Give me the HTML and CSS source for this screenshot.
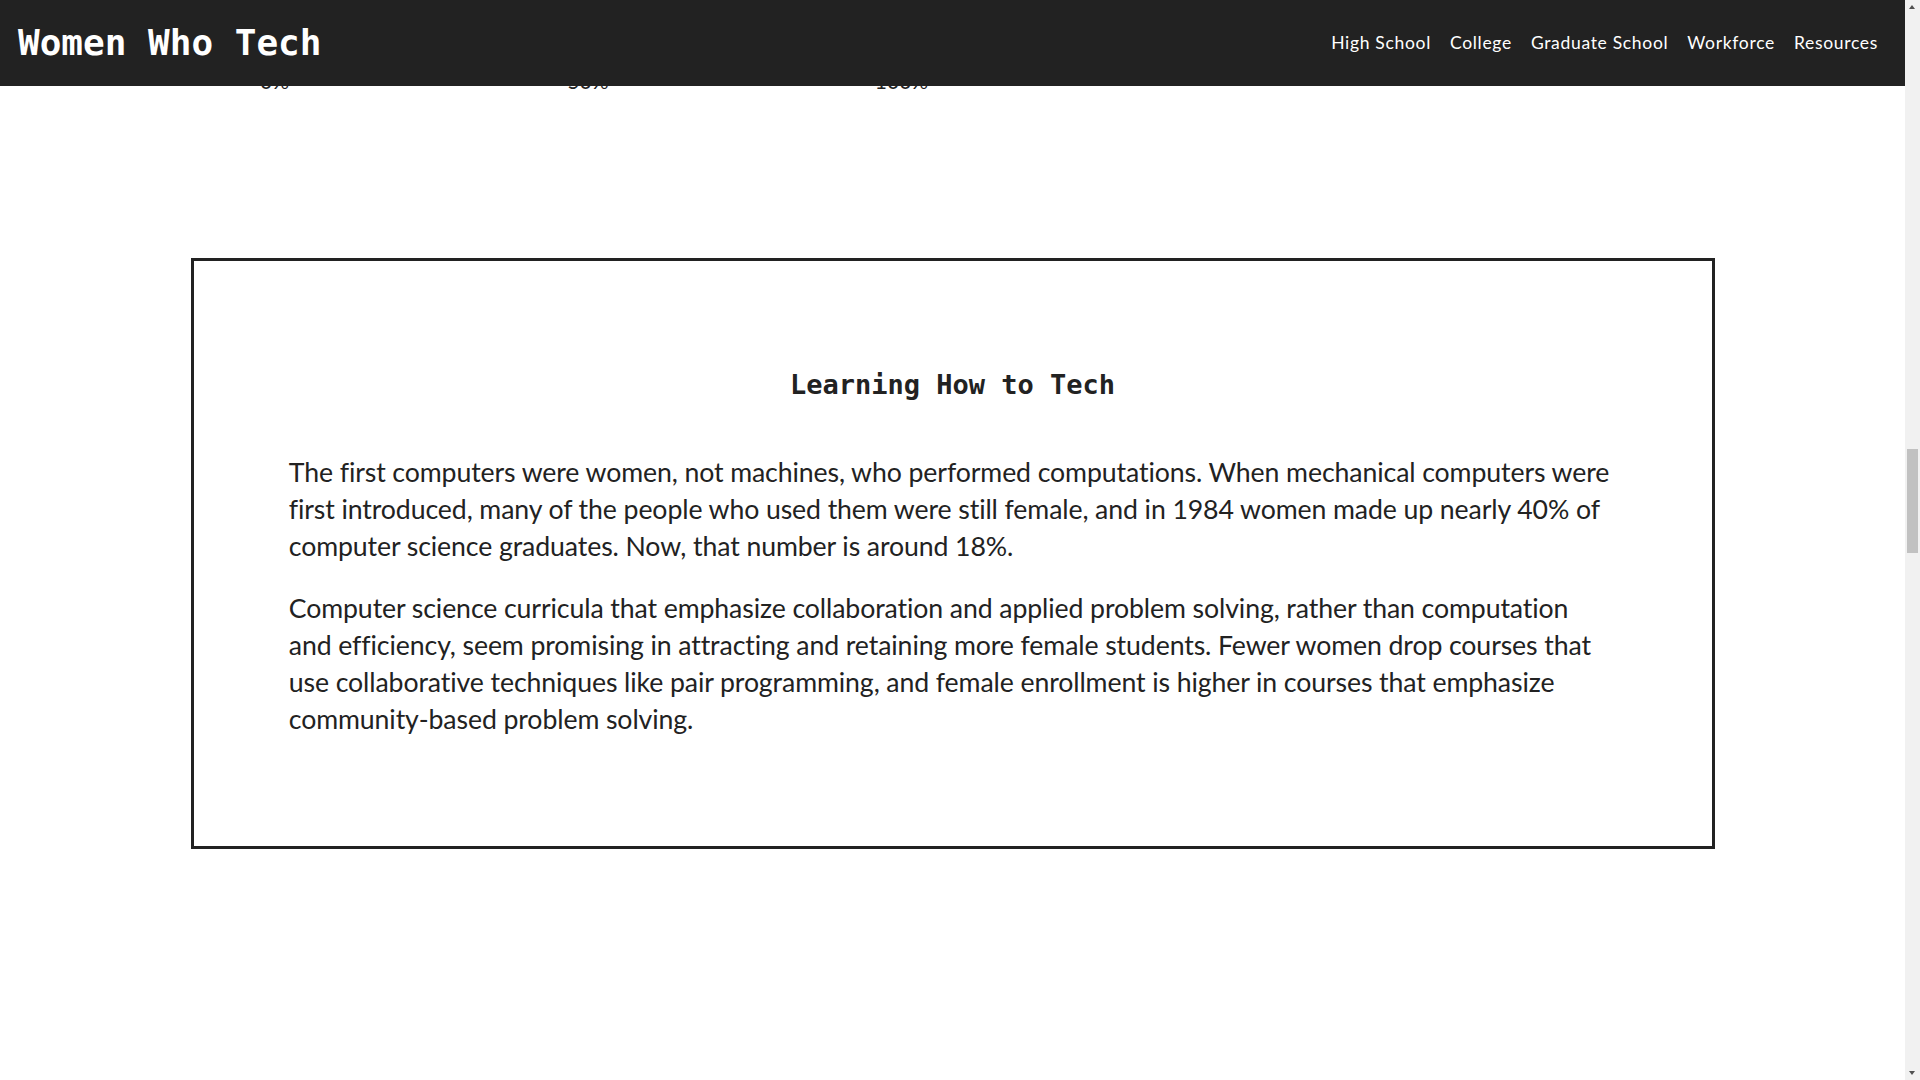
FILE: index.html
```html
<!DOCTYPE html>
<html lang="en">
<head>
<meta charset="utf-8">
<title>Women Who Tech</title>
<link rel="stylesheet" href="styles.css">
</head>
<body>
<header class="site-header">
  <h1 class="logo">Women Who Tech</h1>
  <nav>
    <ul class="nav">
      <li><a href="#high-school">High School</a></li>
      <li><a href="#college">College</a></li>
      <li><a href="#graduate">Graduate School</a></li>
      <li><a href="#workforce">Workforce</a></li>
      <li><a href="#resources">Resources</a></li>
    </ul>
  </nav>
</header>

<div class="scrollbar" aria-hidden="true">
  <span class="scroll-arrow up"></span>
  <span class="scroll-thumb"></span>
  <span class="scroll-arrow down"></span>
</div>

<main>
  <section class="intro" id="high-school">
    <h2 class="section-title">High School</h2>
    <p>Girls and boys take advanced math and science courses at similar rates in high school, yet far fewer girls go on to take computer science.</p>
  </section>

  <section class="chart" id="college">
    <h2 class="section-title">Share of computer science degrees earned by women</h2>
    <div class="bars">
      <div class="bar-row"><span class="bar-label">1984</span><div class="bar" style="width:37%"></div></div>
      <div class="bar-row"><span class="bar-label">2000</span><div class="bar" style="width:28%"></div></div>
      <div class="bar-row"><span class="bar-label">2014</span><div class="bar" style="width:18%"></div></div>
    </div>
    <div class="axis">
      <span class="tick" style="left:0%">0%</span>
      <span class="tick" style="left:50%">50%</span>
      <span class="tick" style="left:100%">100%</span>
    </div>
  </section>

  <section class="learning" id="learning">
    <h2 class="learning-title">Learning How to Tech</h2>
    <p>The first computers were women, not machines, who performed computations. When mechanical computers were first introduced, many of the people who used them were still female, and in 1984 women made up nearly 40% of computer science graduates. Now, that number is around 18%.</p>
    <p>Computer science curricula that emphasize collaboration and applied problem solving, rather than computation and efficiency, seem promising in attracting and retaining more female students. Fewer women drop courses that use collaborative techniques like pair programming, and female enrollment is higher in courses that emphasize community-based problem solving.</p>
  </section>

  <section class="after" id="graduate">
    <h2 class="section-title">Graduate School</h2>
  </section>
</main>
<script src="script.js"></script>
</body>
</html>
```

FILE: styles.css
```css
html {
  overflow-y: scroll;
}

body {
  margin: 0 15px 0 0;
  background: #ffffff;
  color: #222222;
  font-family: Lato, "Open Sans", sans-serif;
}

.site-header {
  position: fixed;
  top: 0;
  left: 0;
  right: 15px;
  height: 86px;
  box-sizing: border-box;
  padding: 0 27px 0 18px;
  background: #222222;
  color: #ffffff;
  display: flex;
  align-items: center;
  justify-content: space-between;
  z-index: 10;
}

.logo {
  margin: 0;
  font-family: "DejaVu Sans Mono", monospace;
  font-weight: bold;
  font-size: 36px;
  line-height: 1;
}

.nav {
  display: flex;
  gap: 19px;
  list-style: none;
  margin: 0 0 2px;
  padding: 0;
}

.nav a {
  color: #ffffff;
  text-decoration: none;
  font-size: 17.5px;
  letter-spacing: 0.68px;
}

/* stand-in for the browser scrollbar of the reference */
.scrollbar {
  position: fixed;
  top: 0;
  right: 0;
  width: 15px;
  height: 100vh;
  background: #f1f1f1;
  z-index: 20;
}

.scroll-arrow {
  position: absolute;
  left: 4px;
  width: 0;
  height: 0;
  border-left: 3.5px solid transparent;
  border-right: 3.5px solid transparent;
}

.scroll-arrow.up {
  top: 5px;
  border-bottom: 4px solid #505050;
}

.scroll-arrow.down {
  bottom: 5px;
  border-top: 4px solid #505050;
}

.scroll-thumb {
  position: absolute;
  left: 2px;
  right: 2px;
  top: 449px;
  height: 104px;
  background: #c1c1c1;
}

.section-title {
  font-family: "DejaVu Sans Mono", monospace;
  font-size: 26.67px;
  text-align: center;
  margin: 0 0 30px;
}

.intro {
  min-height: 4200px;
  box-sizing: border-box;
  padding: 160px 10% 0;
  font-size: 26.67px;
}

.chart {
  height: 400px;
  box-sizing: border-box;
  width: 80%;
  margin: 0 auto;
  display: flex;
  flex-direction: column;
  justify-content: flex-end;
}

.bars {
  display: flex;
  flex-direction: column;
  gap: 20px;
  margin: 0 0 20px 84px;
  width: 627px;
}

.bar-row {
  position: relative;
  height: 40px;
}

.bar {
  height: 100%;
  background: #222222;
}

.bar-label {
  position: absolute;
  right: 100%;
  margin-right: 12px;
  top: 8px;
  font-size: 18px;
}

.axis {
  position: relative;
  margin-left: 84px;
  width: 627px;
  height: 25px;
  font-size: 21px;
  line-height: 25px;
}

.tick {
  position: absolute;
  top: 0;
  transform: translateX(-50%);
}

.learning {
  width: 80%;
  box-sizing: border-box;
  margin: 165px auto 0;
  border: 3px solid #222222;
  padding: 5%;
}

.learning-title {
  margin: 13px 0 54px;
  font-family: "DejaVu Sans Mono", monospace;
  font-weight: bold;
  font-size: 27px;
  line-height: 31px;
  text-align: center;
}

.learning p {
  margin: 0 0 25px;
  font-size: 26.67px;
  line-height: 37px;
  letter-spacing: -0.1px;
}

.learning p:last-child {
  margin-bottom: 12px;
}

.after {
  min-height: 5548px;
  box-sizing: border-box;
  padding-top: 400px;
}
```

FILE: script.js
```js
function placeView() {
  var box = document.getElementById('learning');
  var top = box.getBoundingClientRect().top + window.scrollY;
  window.scrollTo(0, top - 258);
}
placeView();
window.addEventListener('load', placeView);
```
